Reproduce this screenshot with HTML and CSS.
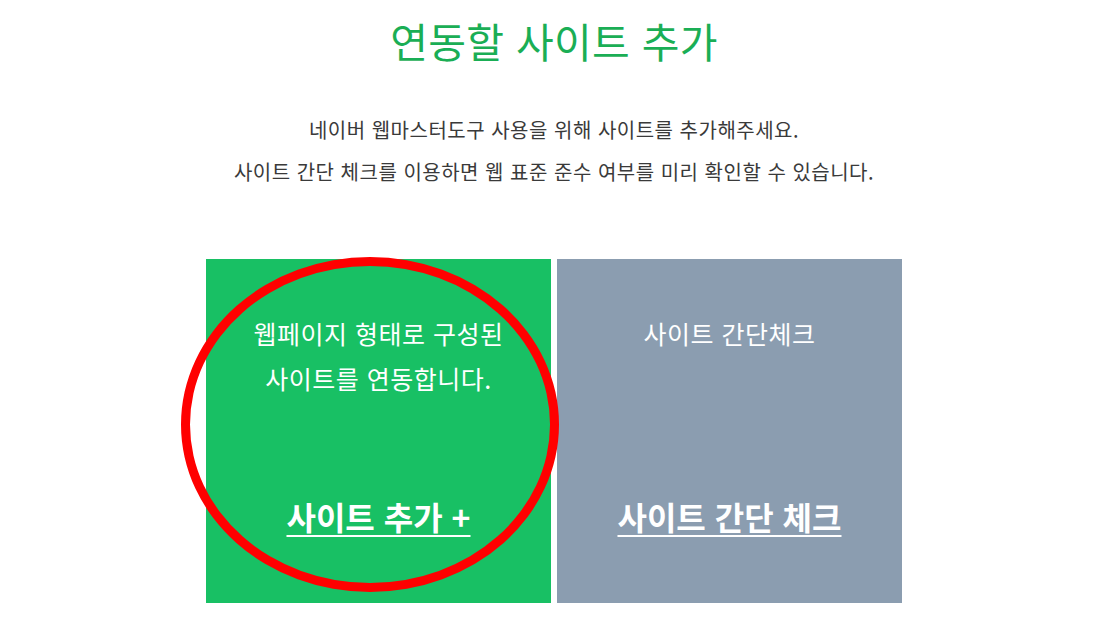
FILE: index.html
```html
<!DOCTYPE html>
<html lang="ko">
<head>
<meta charset="utf-8">
<title>연동할 사이트 추가</title>
<link rel="stylesheet" href="styles.css">
</head>
<body>
<main class="page">
  <h1 class="title">연동할 사이트 추가</h1>
  <div class="desc">
    <p>네이버 웹마스터도구 사용을 위해 사이트를 추가해주세요.</p>
    <p>사이트 간단 체크를 이용하면 웹 표준 준수 여부를 미리 확인할 수 있습니다.</p>
  </div>
  <div class="cards">
    <section class="card card-green">
      <p class="card-text">웹페이지 형태로 구성된<br>사이트를 연동합니다.</p>
      <a class="card-link" href="#">사이트 추가 +</a>
    </section>
    <section class="card card-gray">
      <p class="card-text">사이트 간단체크</p>
      <a class="card-link" href="#">사이트 간단 체크</a>
    </section>
    <div class="mark"></div>
  </div>
</main>
</body>
</html>
```
FILE: styles.css
```css
* { box-sizing: border-box; }
html, body { margin: 0; padding: 0; background: #fff; }
body {
  font-family: "Noto Sans CJK KR", "Noto Sans", sans-serif;
  color: #333;
}
.page {
  display: flex;
  flex-direction: column;
  align-items: center;
  width: 1108px;
  padding-top: 19px;
}
.title {
  margin: 0;
  font-size: 41px;
  line-height: 42px;
  font-weight: 400;
  color: #1aae55;
  letter-spacing: 0.3px;
}
.desc {
  margin-top: 48px;
  text-align: center;
  font-size: 20px;
  line-height: 42px;
  letter-spacing: 0.5px;
  color: #3a3a3a;
}
.desc p { margin: 0; }
.cards {
  position: relative;
  display: flex;
  gap: 6px;
  margin-top: 66px;
}
.card {
  width: 345px;
  height: 344px;
  display: flex;
  flex-direction: column;
  align-items: center;
  padding-top: 52px;
  color: #fff;
}
.card-green { background: #18c064; }
.card-gray { background: #8b9db0; }
.card-text {
  margin: 0;
  font-size: 25px;
  line-height: 45px;
  letter-spacing: 0.5px;
  text-align: center;
}
.card-green .card-link { margin-top: 95px; }
.card-gray .card-link { margin-top: 140px; }
.card-link {
  color: #fff;
  font-size: 32px;
  font-weight: 700;
  line-height: 40px;
  text-decoration: underline;
  text-decoration-thickness: 2px;
  text-underline-offset: 5px;
}
.mark {
  position: absolute;
  left: -25px;
  top: -2px;
  width: 378px;
  height: 335px;
  border: 9px solid #ff0000;
  border-radius: 50%;
  pointer-events: none;
}
```
